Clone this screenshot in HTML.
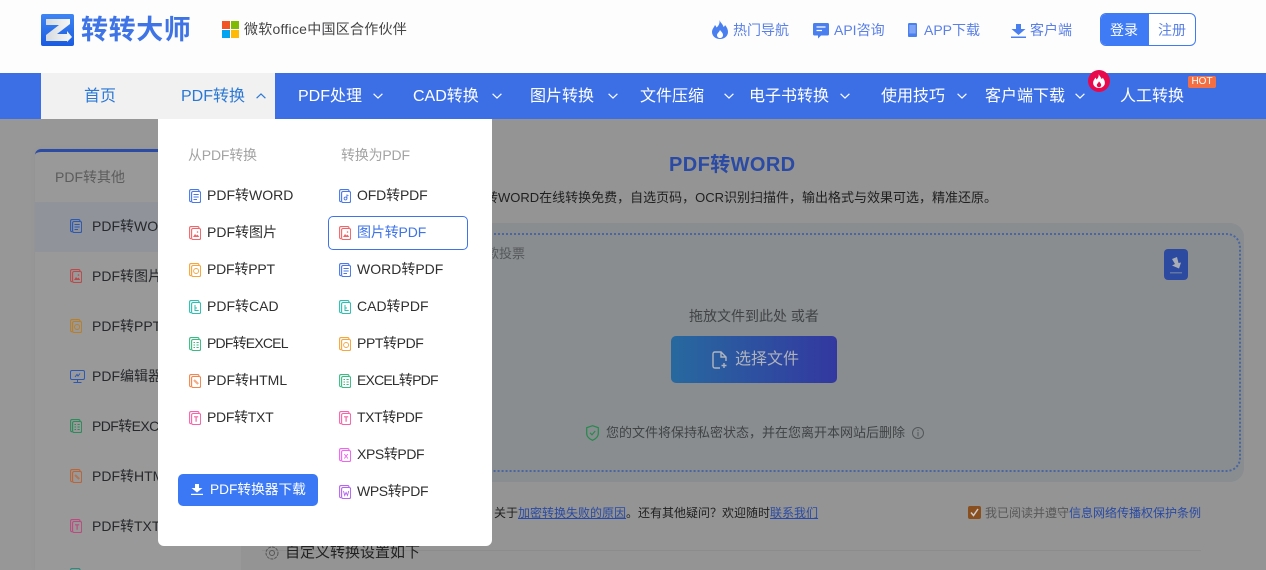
<!DOCTYPE html>
<html lang="zh"><head><meta charset="utf-8"><title>PDF转WORD</title>
<style>
*{box-sizing:border-box}
html,body{margin:0;padding:0;width:1266px;height:570px;overflow:hidden}
#root{position:absolute;left:0;top:0;width:1266px;height:570px;overflow:hidden;background:#979797;font-family:"Liberation Sans","Noto Sans CJK SC",sans-serif;color:#333}
.a{position:absolute;white-space:nowrap}
.t{position:absolute;white-space:nowrap;line-height:20px}
svg{position:absolute;display:block;overflow:visible}
.nav{font-size:16px;color:#fff;top:87px}
.top{font-size:14px;color:#5a80e6;top:20px}
.it{font-size:14px;color:#2f2f2f}
.sb{font-size:14px;color:#26282c}
</style></head><body>
<div id="root">
<svg width="0" height="0" style="position:absolute"><defs>
<g id="base" fill="none" stroke="currentColor" stroke-width="1.100"><path d="M2 12.700Q.6 12.700 .6 11.200V2Q.6 .6 2 .6H8.500Q10 .6 10 2"/><rect x="2.600" y="2.500" width="9" height="11" rx="1.500"/></g>
<symbol id="doc" viewBox="0 0 12 14"><use href="#base"/><path d="M4.500 5.500H9.700M4.500 8H9.700M4.500 10.500H8" fill="none" stroke="currentColor" stroke-width=".9"/></symbol>
<symbol id="img" viewBox="0 0 12 14"><use href="#base"/><path d="M4 11 6 8 7.500 9.500 8.500 8.500 10.300 11Z" fill="currentColor"/><circle cx="8.500" cy="6" r=".8" fill="currentColor"/></symbol>
<symbol id="ppt" viewBox="0 0 12 14"><use href="#base"/><circle cx="7.100" cy="8" r="2.500" fill="none" stroke="currentColor" stroke-width=".9"/></symbol>
<symbol id="cad" viewBox="0 0 12 14"><use href="#base"/><path d="M6 5V10.500H9.700M6 8H8" fill="none" stroke="currentColor" stroke-width="1"/></symbol>
<symbol id="xls" viewBox="0 0 12 14"><use href="#base"/><path d="M4.500 5.500H6M7.500 5.500H9.700M4.500 8H6M7.500 8H9.700M4.500 10.500H6M7.500 10.500H9.700" fill="none" stroke="currentColor"/></symbol>
<symbol id="htm" viewBox="0 0 12 14"><use href="#base"/><path d="M5 6 9.200 10" fill="none" stroke="currentColor" stroke-width="2.200" stroke-opacity=".7"/></symbol>
<symbol id="txt" viewBox="0 0 12 14"><use href="#base"/><path d="M5 5.800H9.200M7.100 5.800V10.800" fill="none" stroke="currentColor" stroke-width="1.200"/></symbol>
<symbol id="xps" viewBox="0 0 12 14"><use href="#base"/><path d="M5.300 6 8.900 10.500M8.900 6 5.300 10.500" fill="none" stroke="currentColor"/></symbol>
<symbol id="wps" viewBox="0 0 12 14"><use href="#base"/><path d="M4.500 6 5.700 10.500 7.100 7.500 8.500 10.500 9.700 6" fill="none" stroke="currentColor" stroke-width=".9"/></symbol>
<symbol id="ofd" viewBox="0 0 12 14"><use href="#base"/><circle cx="6.500" cy="9.500" r="1.400" fill="none" stroke="currentColor" stroke-width=".9"/><path d="M7.900 9.500V6L9.500 6.500" fill="none" stroke="currentColor" stroke-width=".9"/></symbol>
<symbol id="chev" viewBox="0 0 10 6"><path d="M.6 .8 5 5 9.400 .8" fill="none" stroke="currentColor" stroke-width="1.200"/></symbol>
</defs></svg>

<!-- header -->
<div class="a" style="left:0;top:0;width:1266px;height:73px;background:#fdfdfe"></div>
<svg style="left:41px;top:14px" width="33" height="32" viewBox="0 0 33 32"><defs><linearGradient id="lg" x1="0" y1="0" x2="0" y2="1"><stop offset="0" stop-color="#3f86f3"/><stop offset="1" stop-color="#1a5be0"/></linearGradient><linearGradient id="lz" x1="0" y1="0" x2="1" y2="0"><stop offset="0" stop-color="#d5dade"/><stop offset="1" stop-color="#f8f8f8"/></linearGradient></defs><rect width="33" height="32" rx="2" fill="url(#lg)"/><path d="M5 5H29V10L16 20H26V17L31 23 26 28V27H5V21L18 11H5Z" fill="url(#lz)"/></svg>
<div class="a" style="left:81px;top:12px;font-size:27px;line-height:36px;font-weight:700;color:#3e74e6;letter-spacing:.6px">转转大师</div>
<svg style="left:222px;top:21px" width="17" height="17" viewBox="0 0 17 17"><rect width="8" height="8" fill="#f25525"/><rect x="9" width="8" height="8" fill="#80bb02"/><rect y="9" width="8" height="8" fill="#04a5f0"/><rect x="9" y="9" width="8" height="8" fill="#ffba08"/></svg>
<div class="t" style="left:244px;top:19px;font-size:14px;color:#444;letter-spacing:.25px">微软office中国区合作伙伴</div>

<svg style="left:712px;top:20px" width="16" height="19" viewBox="0 0 16 19"><path d="M7.500 0C8.500 3 11 4 11.500 7 12.500 6.500 13 5.500 13 5 15 7.500 16 9.500 16 12 16 16 12.500 19 8 19 3.500 19 0 16 0 12 0 9 2 7.500 3 5 4 6 4.300 7 4.500 7.500 6.500 6 8 3.500 7.500 0Z" fill="#4a7ff0"/><path d="M8 10C9.500 12 11 13 11 15 11 17 9.500 18 8 18 6.500 18 5 17 5 15 5 13.500 7 12.500 8 10Z" fill="#fff"/></svg>
<div class="t top" style="left:733px">热门导航</div>
<svg style="left:813px;top:23px" width="16" height="16" viewBox="0 0 16 16"><path d="M1.500 0H14.500Q16 0 16 1.500V11Q16 12.500 14.500 12.500H8L5 15.500V12.500H1.500Q0 12.500 0 11V1.500Q0 0 1.500 0Z" fill="#4a7ff0"/><path d="M3.500 4H12.500M3.500 7.500H9" stroke="#fff" stroke-width="1.300"/></svg>
<div class="t top" style="left:834px">API咨询</div>
<svg style="left:908px;top:23px" width="9" height="14" viewBox="0 0 9 14"><rect width="9" height="14" rx="1.300" fill="#4a7ff0"/><rect x="1.300" y="2" width="6.400" height="8.500" fill="#7ea4f5"/></svg>
<div class="t top" style="left:924px">APP下载</div>
<svg style="left:1011px;top:24px" width="15" height="14" viewBox="0 0 15 14"><path d="M5 0H10V5H14.500L7.500 11 .5 5H5Z" fill="#4a7ff0"/><rect y="12.500" width="15" height="1.500" fill="#4a7ff0"/></svg>
<div class="t top" style="left:1030px">客户端</div>
<div class="a" style="left:1100px;top:13px;width:96px;height:33px;border:1px solid #3f7bf5;border-radius:6px;background:#fff;overflow:hidden"><div style="width:48px;height:33px;background:#3f7bf5"></div></div>
<div class="t" style="left:1110px;top:20px;font-size:14px;color:#fff">登录</div>
<div class="t" style="left:1158px;top:20px;font-size:14px;color:#5a80e6">注册</div>

<!-- nav -->
<div class="a" style="left:0;top:73px;width:1266px;height:46px;background:#3c6fe6"></div>
<div class="a" style="left:41px;top:73px;width:234px;height:46px;background:#f1f1f1"></div>
<div class="t nav" style="left:84px;color:#2a78d6">首页</div>
<div class="t nav" style="left:181px;color:#2a78d6">PDF转换</div>
<svg style="left:256px;top:93px;color:#2a78d6;transform:scaleY(-1)" width="10" height="6"><use href="#chev"/></svg>
<div class="t nav" style="left:298px">PDF处理</div><svg style="left:373px;top:93px;color:#fff" width="10" height="6"><use href="#chev"/></svg>
<div class="t nav" style="left:413px">CAD转换</div><svg style="left:492px;top:93px;color:#fff" width="10" height="6"><use href="#chev"/></svg>
<div class="t nav" style="left:530px">图片转换</div><svg style="left:608px;top:93px;color:#fff" width="10" height="6"><use href="#chev"/></svg>
<div class="t nav" style="left:640px">文件压缩</div><svg style="left:724px;top:93px;color:#fff" width="10" height="6"><use href="#chev"/></svg>
<div class="t nav" style="left:749px">电子书转换</div><svg style="left:840px;top:93px;color:#fff" width="10" height="6"><use href="#chev"/></svg>
<div class="t nav" style="left:881px">使用技巧</div><svg style="left:957px;top:93px;color:#fff" width="10" height="6"><use href="#chev"/></svg>
<div class="t nav" style="left:985px">客户端下载</div><svg style="left:1075px;top:93px;color:#fff" width="10" height="6"><use href="#chev"/></svg>
<div class="t nav" style="left:1120px">人工转换</div>
<div class="a" style="left:1088px;top:70px;width:22px;height:22px;border-radius:50%;background:#e8094c"></div>
<svg style="left:1093px;top:74px" width="12" height="14" viewBox="0 0 16 19"><path d="M7.500 0C8.500 3 11 4 11.500 7 12.500 6.500 13 5.500 13 5 15 7.500 16 9.500 16 12 16 16 12.500 19 8 19 3.500 19 0 16 0 12 0 9 2 7.500 3 5 4 6 4.300 7 4.500 7.500 6.500 6 8 3.500 7.500 0Z" fill="#fff"/><path d="M8 10C9.500 12 11 13 11 15 11 17 9.500 18 8 18 6.500 18 5 17 5 15 5 13.500 7 12.500 8 10Z" fill="#e8094c"/></svg>
<div class="a" style="left:1188px;top:76px;width:28px;height:12px;background:#f47044;border-radius:2px;color:#fff;font-size:10px;line-height:12px;text-align:center">HOT</div>

<!-- sidebar -->
<div class="a" style="left:35px;top:149px;width:206px;height:421px;background:#999;border-top:3px solid #2c4ca4;border-radius:6px 0 0 0;box-shadow:0 0 3px #909090"></div>
<div class="a" style="left:35px;top:202px;width:206px;height:50px;background:#90939a"></div>
<div class="t" style="left:55px;top:167px;font-size:14px;color:#5c5c5c">PDF转其他</div>
<svg style="left:70px;top:219px;color:#2c58b0" width="12" height="14"><use href="#doc"/></svg><div class="t sb" style="left:92px;top:216px">PDF转WORD</div>
<svg style="left:70px;top:269px;color:#b94a4c" width="12" height="14"><use href="#img"/></svg><div class="t sb" style="left:92px;top:266px">PDF转图片</div>
<svg style="left:70px;top:319px;color:#b87f2a" width="12" height="14"><use href="#ppt"/></svg><div class="t sb" style="left:92px;top:316px">PDF转PPT</div>
<svg style="left:70px;top:370px" width="15" height="13" viewBox="0 0 15 13"><rect x=".5" y=".5" width="14" height="9" rx="1.500" fill="none" stroke="#2c58b0"/><path d="M7.500 10V12.500M3.500 12.500H11.500M5 7 7 4.500 8 6 10 3.500" fill="none" stroke="#2c58b0"/></svg><div class="t sb" style="left:92px;top:366px">PDF编辑器</div>
<svg style="left:70px;top:419px;color:#2d8a5c" width="12" height="14"><use href="#xls"/></svg><div class="t sb" style="left:92px;top:416px;letter-spacing:-.6px">PDF转EXCEL</div>
<svg style="left:70px;top:469px;color:#b9653a" width="12" height="14"><use href="#htm"/></svg><div class="t sb" style="left:92px;top:466px">PDF转HTML</div>
<svg style="left:70px;top:519px;color:#bb4a80" width="12" height="14"><use href="#txt"/></svg><div class="t sb" style="left:92px;top:516px">PDF转TXT</div>
<svg style="left:70px;top:568px;color:#2d8a7c" width="12" height="14"><use href="#doc"/></svg>

<!-- main -->
<div class="a" style="left:241px;top:119px;width:1025px;height:451px;background:#949494"></div>
<div class="t" style="left:669px;top:153px;font-size:20px;line-height:24px;font-weight:700;color:#2a4aa4;letter-spacing:.4px">PDF转WORD</div>
<div class="t" style="right:269px;top:188px;font-size:13px;color:#1f1f1f">PDF转WORD在线转换免费，自选页码，OCR识别扫描件，输出格式与效果可选，精准还原。</div>
<div class="a" style="left:262px;top:223px;width:982px;height:259px;background:#898d90;border-radius:14px"></div>
<div class="a" style="left:272px;top:233px;width:969px;height:239px;border:2px dotted #4966a0;border-radius:14px"></div>
<div class="t" style="left:300px;top:244px;width:225px;text-align:right;font-size:13px;color:#56585a">支持多款投票</div>
<div class="a" style="left:1164px;top:249px;width:24px;height:31px;background:#2c4aa0;border-radius:4px"></div>
<svg style="left:1170px;top:257px" width="12" height="18" viewBox="0 0 12 18"><path d="M2 2 7 0 8.500 6 11 5.500 9 11.500 2 8.500 5 7Z" fill="#a8adb5"/><rect y="15" width="12" height="1.500" fill="#6275a4"/></svg>
<div class="t" style="left:689px;top:306px;font-size:14px;color:#414345">拖放文件到此处 或者</div>
<div class="a" style="left:671px;top:336px;width:166px;height:47px;border-radius:5px;background:linear-gradient(90deg,#27699f,#3338a0)"></div>
<svg style="left:712px;top:351px" width="16" height="18" viewBox="0 0 16 18"><path d="M8 17H3Q1 17 1 15V3Q1 1 3 1H9L14 6V10M9 1V6H14M12 12V17M9.500 14.500H14.500" fill="none" stroke="#b0b4bd" stroke-width="1.400"/></svg>
<div class="t" style="left:735px;top:350px;font-size:16px;color:#aeb2bb">选择文件</div>
<svg style="left:586px;top:425px" width="13" height="16" viewBox="0 0 13 16"><path d="M6.500 .7 12.300 2.700V8.500C12.300 11.500 9.500 14 6.500 15.300 3.500 14 .7 11.500 .7 8.500V2.700Z" fill="none" stroke="#238a4b" stroke-width="1.200"/><path d="M4 7.800 6 9.800 9.200 6" fill="none" stroke="#238a4b" stroke-width="1.100"/></svg>
<div class="t" style="left:606px;top:423px;font-size:13px;color:#414345">您的文件将保持私密状态，并在您离开本网站后删除</div>
<svg style="left:912px;top:427px" width="12" height="12" viewBox="0 0 12 12"><circle cx="6" cy="6" r="5.500" fill="none" stroke="#54575a"/><path d="M6 5V9.500M6 2.500V4" stroke="#54575a"/></svg>
<div class="t" style="left:494px;top:503px;font-size:12px;color:#1f1f1f">关于<span style="color:#2a4aa4;text-decoration:underline">加密转换失败的原因</span>。还有其他疑问？欢迎随时<span style="color:#2a4aa4;text-decoration:underline">联系我们</span></div>
<div class="a" style="left:968px;top:506px;width:13px;height:13px;background:#8a4f1f;border-radius:2px"></div>
<svg style="left:970px;top:508px" width="9" height="9" viewBox="0 0 9 9"><path d="M1 4.500 3.500 7.500 8 1" fill="none" stroke="#ccc" stroke-width="1.500"/></svg>
<div class="t" style="left:985px;top:503px;font-size:12px;color:#585858">我已阅读并遵守<span style="color:#2a4aa4">信息网络传播权保护条例</span></div>
<div class="a" style="left:262px;top:550px;width:939px;height:1px;background:#8c8c8c"></div>
<svg style="left:264px;top:545px" width="16" height="16" viewBox="0 0 16 16"><circle cx="8" cy="8" r="2.500" fill="none" stroke="#555"/><circle cx="8" cy="8" r="6" fill="none" stroke="#555" stroke-dasharray="3 1"/></svg>
<div class="t" style="left:285px;top:543px;font-size:15px;color:#222">自定义转换设置如下</div>

<!-- dropdown -->
<div class="a" style="left:158px;top:119px;width:334px;height:427px;background:#fff;border-radius:0 0 6px 6px"></div>
<div class="t" style="left:188px;top:145px;font-size:14px;color:#a3a3a3;letter-spacing:-.2px">从PDF转换</div>
<div class="t" style="left:341px;top:145px;font-size:14px;color:#a3a3a3;letter-spacing:-.2px">转换为PDF</div>
<div class="a" style="left:328px;top:216px;width:140px;height:34px;border:1px solid #3f74e8;border-radius:5px"></div>

<svg style="left:189px;top:189px;color:#4a78e6" width="12" height="14"><use href="#doc"/></svg><div class="t it" style="left:207px;top:185px">PDF转WORD</div>
<svg style="left:189px;top:226px;color:#f0666a" width="12" height="14"><use href="#img"/></svg><div class="t it" style="left:207px;top:222px">PDF转图片</div>
<svg style="left:189px;top:263px;color:#f5a63c" width="12" height="14"><use href="#ppt"/></svg><div class="t it" style="left:207px;top:259px;letter-spacing:-.2px">PDF转PPT</div>
<svg style="left:189px;top:300px;color:#2fbdb0" width="12" height="14"><use href="#cad"/></svg><div class="t it" style="left:207px;top:296px">PDF转CAD</div>
<svg style="left:189px;top:337px;color:#3dba84" width="12" height="14"><use href="#xls"/></svg><div class="t it" style="left:207px;top:333px;letter-spacing:-.8px">PDF转EXCEL</div>
<svg style="left:189px;top:374px;color:#f0874f" width="12" height="14"><use href="#htm"/></svg><div class="t it" style="left:207px;top:370px">PDF转HTML</div>
<svg style="left:189px;top:411px;color:#f564a8" width="12" height="14"><use href="#txt"/></svg><div class="t it" style="left:207px;top:407px;letter-spacing:-.3px">PDF转TXT</div>

<svg style="left:339px;top:189px;color:#4a78e6" width="12" height="14"><use href="#ofd"/></svg><div class="t it" style="left:357px;top:185px;letter-spacing:-.15px">OFD转PDF</div>
<svg style="left:339px;top:226px;color:#f0666a" width="12" height="14"><use href="#img"/></svg><div class="t it" style="left:357px;top:222px;color:#3f74e8;letter-spacing:-.15px">图片转PDF</div>
<svg style="left:339px;top:263px;color:#4a78e6" width="12" height="14"><use href="#doc"/></svg><div class="t it" style="left:357px;top:259px">WORD转PDF</div>
<svg style="left:339px;top:300px;color:#2fbdb0" width="12" height="14"><use href="#cad"/></svg><div class="t it" style="left:357px;top:296px">CAD转PDF</div>
<svg style="left:339px;top:337px;color:#f5a63c" width="12" height="14"><use href="#ppt"/></svg><div class="t it" style="left:357px;top:333px;letter-spacing:-.4px">PPT转PDF</div>
<svg style="left:339px;top:374px;color:#3dba84" width="12" height="14"><use href="#xls"/></svg><div class="t it" style="left:357px;top:370px;letter-spacing:-.8px">EXCEL转PDF</div>
<svg style="left:339px;top:411px;color:#f564a8" width="12" height="14"><use href="#txt"/></svg><div class="t it" style="left:357px;top:407px;letter-spacing:-.4px">TXT转PDF</div>
<svg style="left:339px;top:448px;color:#ee66ee" width="12" height="14"><use href="#xps"/></svg><div class="t it" style="left:357px;top:444px;letter-spacing:-.4px">XPS转PDF</div>
<svg style="left:339px;top:485px;color:#b366ee" width="12" height="14"><use href="#wps"/></svg><div class="t it" style="left:357px;top:481px;letter-spacing:-.4px">WPS转PDF</div>

<div class="a" style="left:178px;top:474px;width:140px;height:32px;background:#3b78f5;border-radius:5px"></div>
<svg style="left:191px;top:484px" width="12" height="11" viewBox="0 0 12 11"><path d="M4 0H8V4H11.500L6 8.500 .5 4H4Z" fill="#fff"/><rect y="9.800" width="12" height="1.200" fill="#fff"/></svg>
<div class="t" style="left:210px;top:480px;font-size:13.700px;color:#fff">PDF转换器下载</div>
</div>
</body></html>
